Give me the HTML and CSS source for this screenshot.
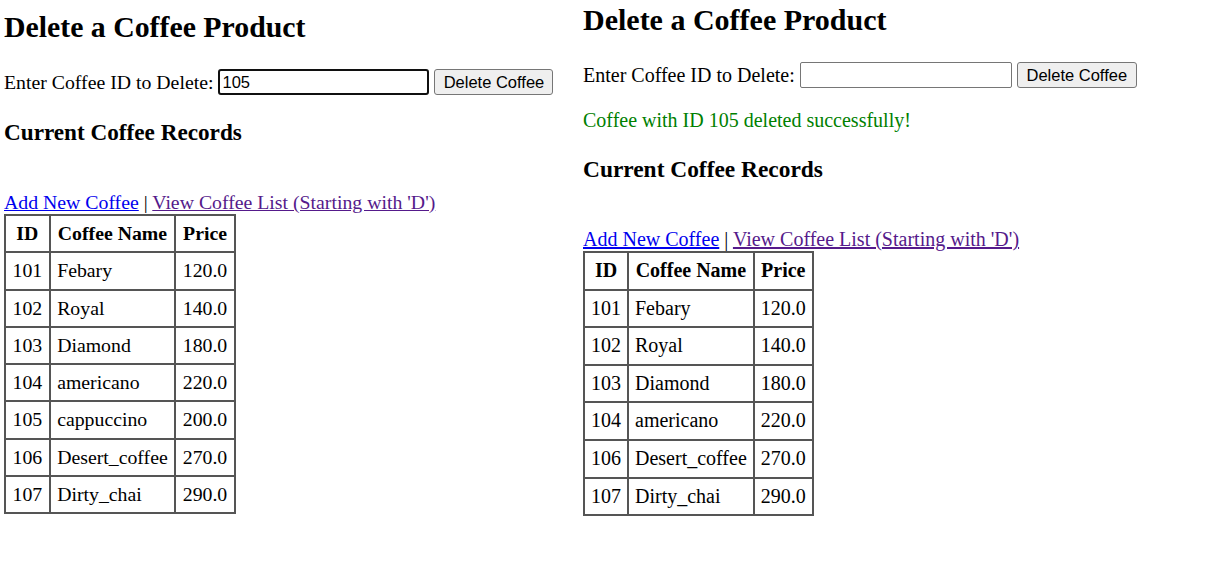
FILE: index.html
```html
<!DOCTYPE html>
<html>
<head>
<meta charset="utf-8">
<title>Delete a Coffee Product</title>
<link rel="stylesheet" href="styles.css">
</head>
<body>
<div class="shots">
  <section class="panel panel-before">
    <h1 class="title">Delete a Coffee Product</h1>
    <form class="del-form">
      <label class="lbl">Enter Coffee ID to Delete:</label>
      <input class="id-input focused" type="text" value="105">
      <button class="btn" type="button">Delete Coffee</button>
    </form>
    <h3 class="sub">Current Coffee Records</h3>
    <div class="links"><a class="lnk" href="#">Add New Coffee</a> | <a class="lnk visited" href="#">View Coffee List (Starting with 'D')</a></div>
    <table class="grid">
      <tr><th>ID</th><th>Coffee Name</th><th>Price</th></tr>
      <tr><td>101</td><td>Febary</td><td class="num">120.0</td></tr>
      <tr><td>102</td><td>Royal</td><td class="num">140.0</td></tr>
      <tr><td>103</td><td>Diamond</td><td class="num">180.0</td></tr>
      <tr><td>104</td><td>americano</td><td class="num">220.0</td></tr>
      <tr><td>105</td><td>cappuccino</td><td class="num">200.0</td></tr>
      <tr><td>106</td><td>Desert_coffee</td><td class="num">270.0</td></tr>
      <tr><td>107</td><td>Dirty_chai</td><td class="num">290.0</td></tr>
    </table>
  </section>
  <section class="panel panel-after">
    <h1 class="title">Delete a Coffee Product</h1>
    <form class="del-form">
      <label class="lbl">Enter Coffee ID to Delete:</label>
      <input class="id-input" type="text" value="">
      <button class="btn" type="button">Delete Coffee</button>
    </form>
    <p class="msg">Coffee with ID 105 deleted successfully!</p>
    <h3 class="sub">Current Coffee Records</h3>
    <div class="links"><a class="lnk" href="#">Add New Coffee</a> | <a class="lnk visited" href="#">View Coffee List (Starting with 'D')</a></div>
    <table class="grid grid-after">
      <tr><th>ID</th><th>Coffee Name</th><th>Price</th></tr>
      <tr><td>101</td><td>Febary</td><td class="num">120.0</td></tr>
      <tr><td>102</td><td>Royal</td><td class="num">140.0</td></tr>
      <tr><td>103</td><td>Diamond</td><td class="num">180.0</td></tr>
      <tr><td>104</td><td>americano</td><td class="num">220.0</td></tr>
      <tr><td>106</td><td>Desert_coffee</td><td class="num">270.0</td></tr>
      <tr><td>107</td><td>Dirty_chai</td><td class="num">290.0</td></tr>
    </table>
  </section>
</div>
</body>
</html>
```
FILE: styles.css
```css
html, body {
  margin: 0;
  padding: 0;
  background: #ffffff;
}
body {
  font-family: "Liberation Serif", "Times New Roman", serif;
  font-size: 19.8px;
  color: #000;
}
.shots {
  display: flex;
  align-items: flex-start;
}
.panel {
  width: 575px;
  padding-left: 4px;
  display: flex;
  flex-direction: column;
  align-items: flex-start;
}
.panel-after {
  font-size: 20px;
}
.title {
  font-size: 29.8px;
  font-weight: bold;
  line-height: 40px;
  margin: 7px 0 22px;
}
.panel-after .title {
  margin-top: 0;
  font-size: 30px;
}
.del-form {
  display: flex;
  align-items: center;
  height: 26px;
  margin: 0;
}
.lbl {
  line-height: 23px;
  margin-right: 5px;
}
.id-input {
  box-sizing: border-box;
  width: 211px;
  height: 26px;
  padding: 1px 3px;
  border: 1px solid #767676;
  border-radius: 2px;
  font-family: "Liberation Sans", Arial, sans-serif;
  font-size: 16.5px;
  color: #000;
  background: #fff;
  margin: 0 5px 0 0;
  outline: none;
}
.panel-after .id-input {
  width: 212px;
}
.id-input.focused {
  border: 2px solid #101010;
  border-radius: 3px;
  padding: 0 2px;
}
.btn {
  box-sizing: border-box;
  height: 26px;
  width: 120px;
  padding: 0;
  border: 1px solid #767676;
  border-radius: 3px;
  background: #efefef;
  font-family: "Liberation Sans", Arial, sans-serif;
  font-size: 16.5px;
  color: #000;
  margin: 0;
}
.panel-before .btn {
  width: 119px;
}
.msg {
  color: #008000;
  line-height: 23px;
  margin: 21px 0 0;
}
.sub {
  font-size: 23.2px;
  font-weight: bold;
  line-height: 27px;
  margin: 24px 0 0;
}
.panel-after .sub {
  font-size: 23.4px;
}
.links {
  line-height: 23px;
  margin-top: 45px;
}
.lnk {
  color: #0000ee;
  text-decoration: underline;
}
.lnk.visited {
  color: #551a8b;
}
.grid {
  border-collapse: collapse;
  border: 2px solid #555;
  margin-top: 0;
}
.grid th, .grid td {
  border: 2px solid #555;
  padding: 7px 6.5px;
  line-height: 21.3px;
  text-align: left;
}
.grid-after th, .grid-after td {
  line-height: 21.6px;
  padding: 7px 6px;
}
.grid th {
  text-align: center;
  font-weight: bold;
}
.grid td.num {
  text-align: right;
}
```
